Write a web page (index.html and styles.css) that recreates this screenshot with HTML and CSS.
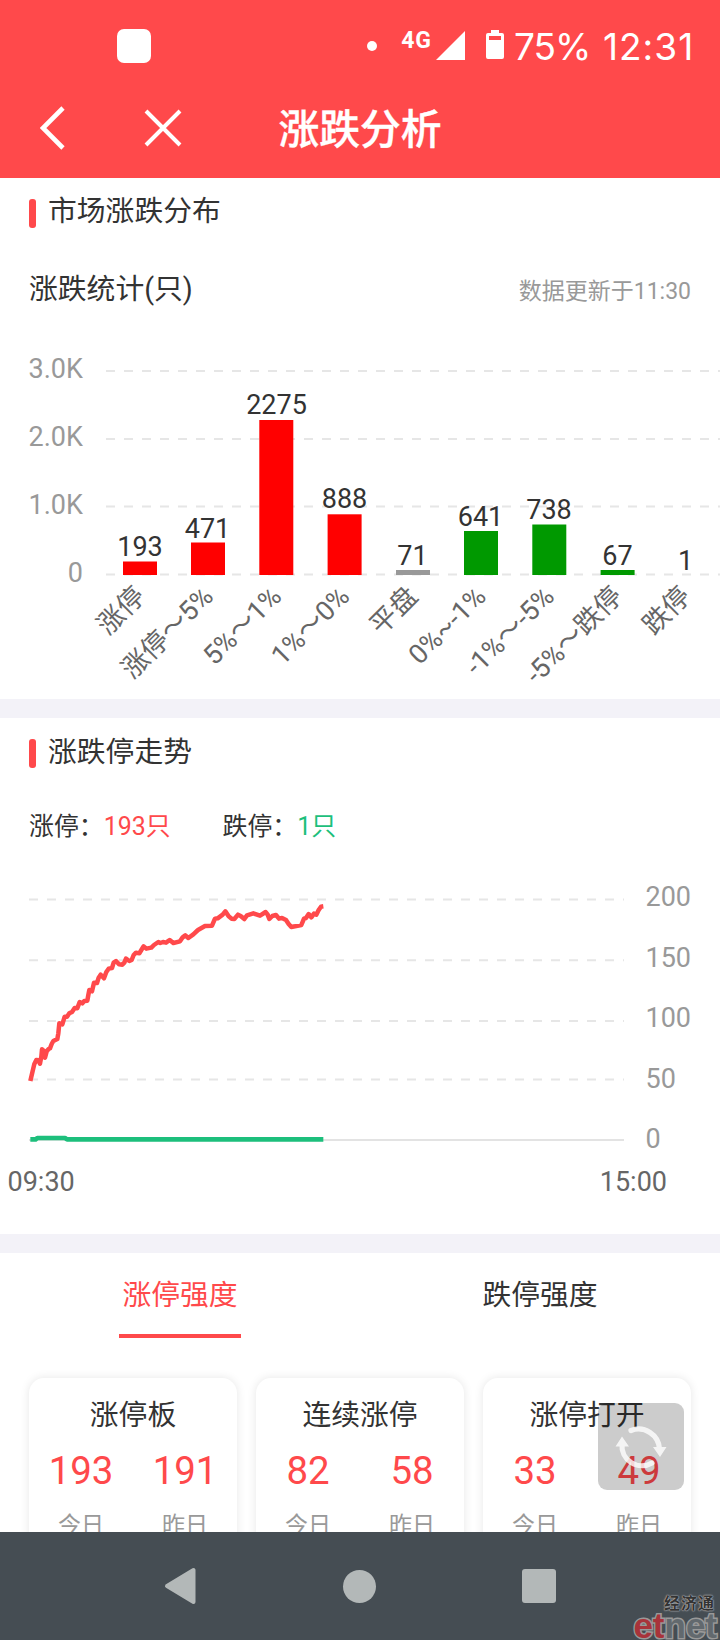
FILE: index.html
```html
<!DOCTYPE html>
<html lang="zh-CN">
<head>
    <meta charset="UTF-8">
    <meta name="viewport" content="width=device-width, initial-scale=1.0">
    <title>涨跌分析</title>
    <link rel="stylesheet" href="styles.css">
</head>
<body>
    <div class="app">
        <header class="header">
            <div class="status-bar">
                <span class="notification"></span>
                <div class="status-right">
                    <span class="dot"></span>
                    <span class="network">4G</span>
                    <svg class="signal" width="29" height="29" viewBox="0 0 29 29"><path d="M29 0V29H0Z" fill="#fff"/></svg>
                    <svg class="battery" width="18" height="29" viewBox="0 0 18 29"><path fill="#fff" fill-rule="evenodd" d="M5 0H13V3H16Q18 3 18 5V27Q18 29 16 29H2Q0 29 0 27V5Q0 3 2 3H5ZM3 6V10H15V6Z"/></svg>
                    <span class="percent">75%</span>
                    <span class="clock">12:31</span>
                </div>
            </div>
            <div class="title-bar">
                <svg class="back" width="26" height="44" viewBox="0 0 26 44"><path d="M23 2L3 22L23 42" fill="none" stroke="#fff" stroke-width="4.6"/></svg>
                <svg class="close" width="38" height="38" viewBox="0 0 38 38"><path d="M2 2L36 36M36 2L2 36" fill="none" stroke="#fff" stroke-width="4"/></svg>
                <h1>涨跌分析</h1>
            </div>
        </header>

        <section class="section distribution">
            <h2 class="section-title">市场涨跌分布</h2>
            <div class="sub-row">
                <h3>涨跌统计(只)</h3>
                <span class="updated">数据更新于11:30</span>
            </div>
            <svg class="bar-chart" width="720" height="369" viewBox="0 330 720 369">
                <g class="grid">
                    <path d="M106 371H720M106 439H720M106 506.5H720M106 574.5H720"/>
                </g>
                <g class="axis-label" text-anchor="end">
                    <text x="83" y="377.5">3.0K</text>
                    <text x="83" y="446">2.0K</text>
                    <text x="83" y="514">1.0K</text>
                    <text x="83" y="582">0</text>
                </g>
                <g class="up">
                    <rect x="123" y="561.5" width="34" height="13.5"/>
                    <rect x="191" y="542.5" width="34" height="32.5"/>
                    <rect x="259.3" y="420" width="34" height="155"/>
                    <rect x="327.6" y="514.3" width="34" height="60.7"/>
                </g>
                <rect class="flat" x="396" y="570" width="34" height="5"/>
                <g class="down">
                    <rect x="464" y="531" width="34" height="44"/>
                    <rect x="532.3" y="524.5" width="34" height="50.5"/>
                    <rect x="600.6" y="570" width="34" height="5"/>
                </g>
                <g class="value-label" text-anchor="middle">
                    <text x="140" y="555.5">193</text>
                    <text x="207.5" y="537.5">471</text>
                    <text x="276.5" y="414">2275</text>
                    <text x="344.5" y="508">888</text>
                    <text x="412.5" y="565">71</text>
                    <text x="480.5" y="525.5">641</text>
                    <text x="549" y="518.5">738</text>
                    <text x="617.5" y="565">67</text>
                    <text x="685.5" y="569.5">1</text>
                </g>
                <g class="category-label" text-anchor="end">
                    <text transform="translate(146.5 598) rotate(-45)">涨停</text>
                    <text transform="translate(214.7 598) rotate(-45)">涨停～5%</text>
                    <text transform="translate(282.9 598) rotate(-45)">5%～1%</text>
                    <text transform="translate(351.1 598) rotate(-45)">1%～0%</text>
                    <text transform="translate(419.3 598) rotate(-45)">平盘</text>
                    <text transform="translate(487.5 598) rotate(-45)">0%~-1%</text>
                    <text transform="translate(555.7 598) rotate(-45)">-1%～-5%</text>
                    <text transform="translate(623.9 598) rotate(-45)">-5%～跌停</text>
                    <text transform="translate(692.1 598) rotate(-45)">跌停</text>
                </g>
            </svg>
        </section>

        <section class="section trend">
            <h2 class="section-title">涨跌停走势</h2>
            <div class="legend">
                <span>涨停：<em class="red">193只</em></span>
                <span>跌停：<em class="green">1只</em></span>
            </div>
            <svg class="line-chart" width="720" height="354" viewBox="0 0 720 354">
                <g class="grid">
                    <path d="M29 19.5H624M29 80.2H624M29 141H624M29 199.5H624"/>
                </g>
                <path class="base-line" d="M29 260H624"/>
                <g transform="scale(.33333)">
                    <polyline class="line-up" points="91,603 98,573 103,552 109,540 115,541 120,551 124,530 126,508 131,512 135,533 140,514 146,507 150,505 155,492 160,483 172,477 175,460 178,430 187,433 194,410 201,410 208,400 216,396 224,384 232,385 239,366 247,370 253,363 262,362 265,345 268,330 276,334 282,308 291,309 296,293 302,284 312,295 319,276 326,266 336,264 341,248 348,243 357,253 367,254 373,248 378,236 388,243 395,240 401,225 408,218 418,220 424,210 431,199 439,206 454,203 462,195 475,186 481,189 489,186 498,188 509,180 520,189 540,184 548,172 556,166 565,174 580,163 594,150 615,138 636,137 645,116 653,115 668,104 676,94 686,109 695,116 703,117 714,104 722,108 733,117 741,106 760,100 780,107 797,96 803,104 808,117 817,108 828,105 837,116 846,114 858,120 866,132 874,141 885,139 904,135 912,116 918,114 926,102 934,112 942,101 949,104 956,90 963,80 970,79"/>
                    <polyline class="line-down" points="91,778 107,778 112,774 195,774 201,778 970,778"/>
                </g>
                <g class="axis-label">
                    <text x="645.5" y="25.7">200</text>
                    <text x="645.5" y="86.7">150</text>
                    <text x="645.5" y="147">100</text>
                    <text x="645.5" y="207.7">50</text>
                    <text x="645.5" y="268">0</text>
                </g>
                <g class="time-label">
                    <text x="7.5" y="310.7">09:30</text>
                    <text x="667" y="310.7" text-anchor="end">15:00</text>
                </g>
            </svg>
        </section>

        <section class="section strength">
            <div class="tabs">
                <div class="tab active">涨停强度</div>
                <div class="tab">跌停强度</div>
            </div>
            <div class="cards">
                <div class="card">
                    <h4>涨停板</h4>
                    <div class="stats">
                        <div class="stat"><b>193</b><span>今日</span></div>
                        <div class="stat"><b>191</b><span>昨日</span></div>
                    </div>
                </div>
                <div class="card">
                    <h4>连续涨停</h4>
                    <div class="stats">
                        <div class="stat"><b>82</b><span>今日</span></div>
                        <div class="stat"><b>58</b><span>昨日</span></div>
                    </div>
                </div>
                <div class="card">
                    <h4>涨停打开</h4>
                    <div class="stats">
                        <div class="stat"><b>33</b><span>今日</span></div>
                        <div class="stat"><b>49</b><span>昨日</span></div>
                    </div>
                </div>
            </div>
            <div class="refresh">
                <svg width="86" height="87" viewBox="0 0 86 87">
                    <g fill="none" stroke="#fff" stroke-width="5.2">
                        <path d="M33 27.5A21 21 0 0 1 61.5 46" stroke-linecap="round"/>
                        <path d="M24 41A20 20 0 0 0 54 60" stroke-linecap="round"/>
                    </g>
                    <path d="M55 44H68.5L62 54ZM17.5 43.5H31L24 33.5Z" fill="#fff"/>
                </svg>
            </div>
        </section>

        <nav class="nav-bar">
            <svg width="34" height="38" viewBox="0 0 34 38"><path d="M30.5 3V35L4 19Z" fill="#b3b8b8" stroke="#b3b8b8" stroke-width="4" stroke-linejoin="round"/></svg>
            <span class="nav-home"></span>
            <span class="nav-recent"></span>
            <div class="watermark">
                <div class="wm-cn">经济通</div>
                <div class="wm-en"><i>et</i>net</div>
            </div>
        </nav>
    </div>
</body>
</html>
```
FILE: styles.css
```css
* {
    box-sizing: border-box;
}

body {
    margin: 0;
    background-color: #fff;
    color: #333;
    font-family: Roboto, "Noto Sans CJK SC", sans-serif;
}

h1, h2, h3, h4 {
    margin: 0;
    font-weight: 400;
}

.app {
    width: 720px;
    height: 1640px;
    display: flex;
    flex-direction: column;
    overflow: hidden;
}

/* header */
.header {
    height: 178px;
    flex-shrink: 0;
    background-color: #ff494b;
    color: #fff;
}

.status-bar {
    height: 90px;
    display: flex;
    justify-content: space-between;
    align-items: center;
    padding: 1px 27px 0 117px;
}

.notification {
    width: 34px;
    height: 34px;
    border-radius: 7px;
    background-color: #fff;
}

.status-right {
    display: flex;
    align-items: center;
}

.dot {
    width: 10px;
    height: 10px;
    border-radius: 50%;
    background-color: #fff;
    margin-right: 24px;
}

.network {
    font-size: 23px;
    font-weight: 700;
    line-height: 24px;
    letter-spacing: 1px;
    margin: 0 4px 9px 0;
}

.signal {
    margin-top: -1px;
}

.battery {
    margin: -2px 10px 0 21px;
}

.percent, .clock {
    font-family: Inter, sans-serif;
    font-size: 37px;
    line-height: 44px;
    margin-top: 3px;
}

.percent {
    width: 77px;
    letter-spacing: -1px;
}

.clock {
    width: 90px;
    margin-left: 12px;
    letter-spacing: 1px;
}

.title-bar {
    height: 76px;
    display: grid;
    grid-template-columns: 100px 140px 240px 240px;
    align-items: center;
}

.back {
    margin-left: 40px;
}

.close {
    margin-left: 44px;
}

.title-bar h1 {
    text-align: center;
    font-size: 40.8px;
    font-weight: 500;
    line-height: 60px;
    padding-top: 4px;
    -webkit-text-stroke: 0.4px #fff;
}

/* sections */
.section {
    background-color: #fff;
    flex-shrink: 0;
}

.distribution {
    height: 540px;
    border-bottom: 19px solid #f3f2f8;
}

.trend {
    height: 535px;
    border-bottom: 19px solid #f3f2f8;
}

.section-title {
    display: flex;
    align-items: center;
    height: 68px;
    padding-left: 29px;
    font-size: 28.8px;
    line-height: 40px;
}

.distribution .section-title {
    height: 66px;
    margin-bottom: 2px;
}

.section-title::before {
    content: "";
    width: 7px;
    height: 29px;
    margin: 3px 12px 0 0;
    border-radius: 3px;
    background-color: #ff494b;
}

.distribution .section-title::before {
    margin-top: 5px;
}

.sub-row {
    height: 84px;
    padding: 0 29px 3px 29px;
    display: flex;
    justify-content: space-between;
    align-items: center;
}

.sub-row h3 {
    font-size: 28.8px;
}

.updated {
    font-size: 23px;
    color: #999;
    margin-top: 4px;
}

svg {
    display: block;
}

svg text {
    font-size: 27px;
}

.grid {
    fill: none;
    stroke: #e6e6e6;
    stroke-width: 2;
    stroke-dasharray: 9 9;
}

.axis-label {
    fill: #999;
}

.value-label {
    fill: #333;
}

.category-label, .time-label {
    fill: #666;
}

.up {
    fill: #f00;
}

.flat {
    fill: #999;
}

.down {
    fill: #090;
}

.legend {
    height: 76px;
    padding: 0 29px 1px;
    display: flex;
    align-items: center;
    gap: 52px;
    font-size: 24.9px;
}

.trend .line-chart {
    margin-top: 18px;
}

.legend em {
    font-style: normal;
}

.red {
    color: #ff494b;
}

.green {
    color: #1dbf7c;
}

.base-line {
    stroke: #e3e3e3;
    stroke-width: 2;
}

.line-up, .line-down {
    fill: none;
    stroke: #ff494b;
    stroke-width: 13.5;
    stroke-linejoin: round;
}

.line-down {
    stroke: #1dbf7c;
    stroke-width: 14;
}

/* strength */
.strength {
    position: relative;
    height: 279px;
    overflow: hidden;
}

.tabs {
    display: flex;
    height: 85px;
}

.tab {
    width: 122px;
    margin: 0 119px;
    font-size: 28.8px;
    line-height: 84px;
    text-align: center;
    white-space: nowrap;
}

.tab.active {
    color: #ff494b;
    border-bottom: 4px solid #ff494b;
}

.cards {
    display: grid;
    grid-template-columns: repeat(3, 208px);
    gap: 19px;
    padding: 40px 29px 0;
}

.card {
    height: 200px;
    padding-top: 16px;
    border-radius: 15px;
    background-color: #fff;
    box-shadow: 0 0 10px rgba(0, 0, 0, 0.1);
    text-align: center;
}

.card h4 {
    font-size: 28.8px;
    line-height: 42px;
}

.stats {
    display: flex;
}

.stat {
    flex: 1;
    display: flex;
    flex-direction: column;
}

.stat b {
    font-size: 38.4px;
    font-weight: 400;
    line-height: 70px;
    color: #ff494b;
}

.stat span {
    font-size: 23px;
    line-height: 40px;
    color: #999;
}

.refresh {
    position: absolute;
    left: 598px;
    top: 150px;
    width: 86px;
    height: 87px;
    border-radius: 9px;
    background-color: rgba(0, 0, 0, 0.2);
}

.refresh svg {
    opacity: 0.8;
}

/* navigation */
.nav-bar {
    position: relative;
    height: 108px;
    flex-shrink: 0;
    display: flex;
    align-items: center;
    justify-content: space-between;
    padding: 0 164px 0 163px;
    background-color: #454d53;
}

.nav-home {
    width: 33px;
    height: 33px;
    border-radius: 50%;
    background-color: #b3b8b8;
}

.nav-recent {
    width: 34px;
    height: 34px;
    border-radius: 3px;
    background-color: #b3b8b8;
}

.watermark {
    position: absolute;
    right: 3px;
    bottom: 0;
    text-align: right;
}

.wm-cn {
    font-size: 16px;
    font-weight: 700;
    line-height: 17px;
    letter-spacing: 1px;
    padding-right: 2px;
    color: #333;
    text-shadow: 0 0 2px #ccc, 0 0 1px #ccc;
}

.wm-en {
    font-family: "Liberation Sans", sans-serif;
    font-size: 35px;
    font-weight: 700;
    line-height: 28px;
    color: #62696e;
    -webkit-text-stroke: 3px #999;
    paint-order: stroke fill;
}

.wm-en i {
    font-style: normal;
    color: #a8333a;
}
```
